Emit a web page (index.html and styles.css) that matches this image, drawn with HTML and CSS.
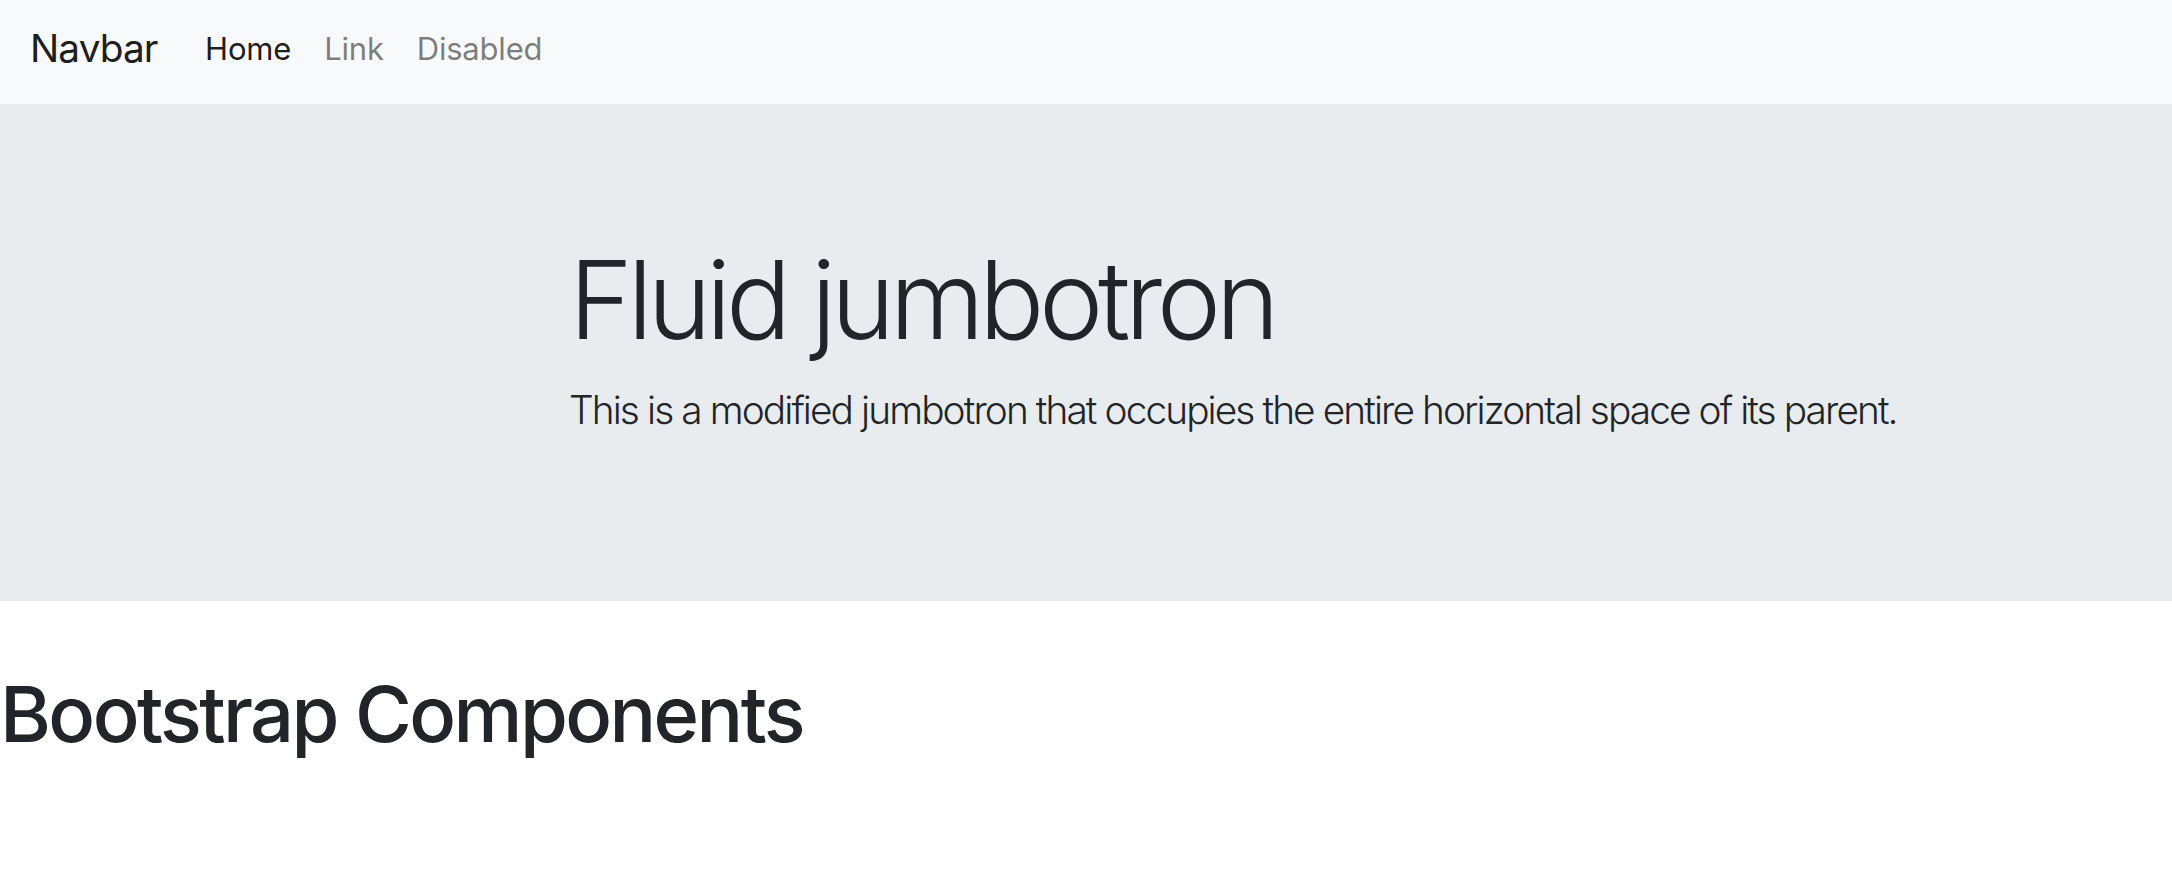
FILE: index.html
```html
<!DOCTYPE html>
<html>
<head>
<title>Bootstrap Components</title>
<meta charset="utf-8">
<link rel="stylesheet" href="styles.css">
</head>
<body>
<nav class="navbar">
	<a class="brand" href="#">Navbar</a>
	<ul class="nav">
		<li><a class="nav-link active" href="#">Home</a></li>
		<li><a class="nav-link" href="#">Link</a></li>
		<li><a class="nav-link disabled" href="#">Disabled</a></li>
	</ul>
</nav>

<div class="jumbotron">
	<div class="container">
		<h1 class="display">Fluid jumbotron</h1>
		<p class="lead">This is a modified jumbotron that occupies the entire horizontal space of its parent.</p>
	</div>
</div>

<h1 class="title">Bootstrap Components</h1>
</body>
</html>
```

FILE: styles.css
```css
body {
margin:0;
font-family:Inter, "Liberation Sans", sans-serif;
color:#212529;
background:#ffffff; }

a { text-decoration:none; }

.navbar {
display:flex;
align-items:center;
height:104px;
box-sizing:border-box;
padding:0 0 8px 30px;
background:#f8f9fa; }

.brand {
font-size:38.8px;
line-height:1.5;
letter-spacing:-0.9px;
color:rgba(0,0,0,.9);
margin-right:31px; }

.nav {
display:flex;
list-style:none;
margin:0; padding:0; }

.nav-link {
display:block;
font-size:31px;
line-height:1.5;
letter-spacing:-0.2px;
padding:3px 16.5px 0;
color:rgba(0,0,0,.5); }
.nav-link.active { color:rgba(0,0,0,.9); }

.jumbotron {
background:#e9ecef;
padding:131px 0; }

.container {
padding-left:569px; }

.display {
font-size:108.6px;
font-weight:300;
line-height:1.2;
letter-spacing:-5.4px;
margin:0 0 15.5px; }

.lead {
font-size:38.8px;
font-weight:300;
line-height:1.5;
letter-spacing:-1.9px;
margin:0 0 31px;
white-space:nowrap; }

.title {
font-size:77.6px;
font-weight:500;
line-height:1.2;
letter-spacing:-2.6px;
margin:67px 0 0; }
```
